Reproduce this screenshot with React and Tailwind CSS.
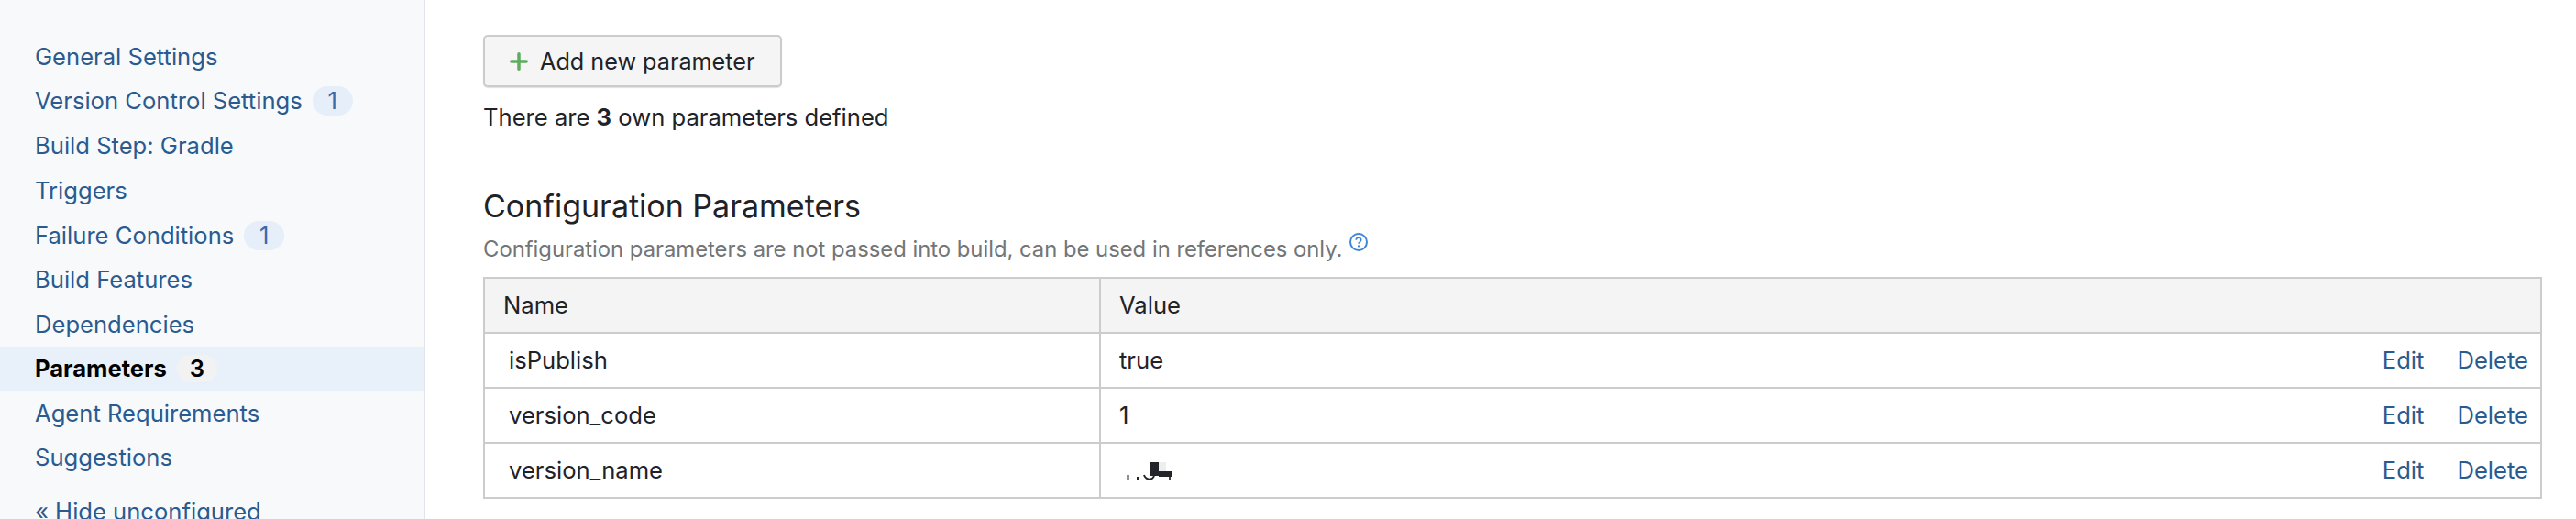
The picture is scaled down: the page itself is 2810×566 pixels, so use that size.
import { Plus } from "lucide-react";

const navItems = [
  { label: "General Settings", h: "h-12" },
  { label: "Version Control Settings", badge: 1, h: "h-12" },
  { label: "Build Step: Gradle", h: "h-[49px]" },
  { label: "Triggers", h: "h-[50px]" },
  { label: "Failure Conditions", badge: 1, h: "h-12" },
  { label: "Build Features", h: "h-12" },
  { label: "Dependencies", h: "h-[49px]" },
  { label: "Parameters", badge: 3, active: true, h: "h-12" },
  { label: "Agent Requirements", h: "h-[49px]" },
  { label: "Suggestions", h: "h-12" },
];

const params = [
  { name: "isPublish", value: "true" },
  { name: "version_code", value: "1" },
  { name: "version_name", value: "redacted" },
];

function NavItem({ item }) {
  if (item.active) {
    return (
      <div className={`flex items-center pl-[38px] bg-[#e8f1fa] ${item.h}`}>
        <span className="font-bold text-black">{item.label}</span>
        <span className="ml-[11px] w-[44px] h-[30px] rounded-full bg-[#f2f2f2] text-center leading-[30px] font-semibold text-black">
          {item.badge}
        </span>
      </div>
    );
  }
  return (
    <div className={`flex items-center pl-[38px] ${item.h}`}>
      <span className="text-[#2a5b90]">{item.label}</span>
      {item.badge && (
        <span className="ml-[11px] w-[44px] h-[32px] rounded-full bg-[#e6eff9] text-center leading-[32px] text-[#3a69ac]">
          {item.badge}
        </span>
      )}
    </div>
  );
}

// the value in the last row is scribbled out in the screenshot
function RedactedValue() {
  return (
    <svg width="70" height="30" viewBox="0 0 70 30">
      <rect x="43" y="6" width="8" height="10" fill="#eeeeee" />
      <rect x="8.5" y="20" width="2" height="5" fill="#222" />
      <rect x="19" y="22" width="3" height="3" fill="#222" />
      <path d="M27 20c2 6 9 6 11 1" fill="none" stroke="#222" strokeWidth="2" />
      <rect x="33" y="6" width="10" height="15" fill="#23252b" />
      <rect x="43" y="16" width="15" height="6" fill="#23252b" />
      <rect x="54" y="22" width="2" height="4" fill="#444" />
    </svg>
  );
}

function ParamRow({ param }) {
  return (
    <tr className="h-[60px]">
      <td className="border-2 border-[#cccccc] pl-[26px] p-0">{param.name}</td>
      <td className="border-2 border-[#cccccc] pl-[20px] p-0">
        <div className="flex items-center justify-between pr-[13px]">
          {param.value === "redacted" ? <RedactedValue /> : <span>{param.value}</span>}
          <span className="flex gap-[36px] text-[#2a5b90]">
            <span>Edit</span>
            <span>Delete</span>
          </span>
        </div>
      </td>
    </tr>
  );
}

export default function App() {
  return (
    <div className="flex h-[566px] overflow-hidden bg-white text-[25.6px] leading-[36px] text-[#1f2227] font-['Inter',sans-serif]">
      <aside className="w-[464px] shrink-0 bg-[#f7f9fb] border-r-2 border-[#e1e5e9] pt-[38px]">
        {navItems.map((item) => (
          <NavItem key={item.label} item={item} />
        ))}
        <div className="mt-[17px] pl-[38px] text-[#2a5b90]">« Hide unconfigured</div>
      </aside>

      <main className="flex-1 pl-[63px] pr-[37px] pt-[38px]">
        <button className="flex items-center w-[326px] h-[57px] pl-[23px] bg-[#f5f5f5] border-2 border-[#cccccc] rounded-[5px] shadow-[0_1px_1px_rgba(0,0,0,0.12)] text-[25.2px]">
          <Plus size={28} strokeWidth={3} className="text-[#5cad60]" />
          <span className="ml-[9px]">Add new parameter</span>
        </button>
        <p className="mt-[15px]">
          There are <b className="font-bold">3</b> own parameters defined
        </p>

        <h2 className="mt-[57px] text-[34px] leading-[44px] font-normal">Configuration Parameters</h2>
        <p className="mt-[8px] flex text-[23.8px] leading-[34px] text-[#737577]">
          Configuration parameters are not passed into build, can be used in references only.
          <svg width="20" height="20" viewBox="0 0 20 20" className="ml-[8px] mt-[-1px]" fill="none">
            <circle cx="10" cy="10" r="9" stroke="#3f87d9" strokeWidth="2" />
            <path d="M7.2 7.8c0-3.6 5.6-3.6 5.6 0 0 2-2.8 2-2.8 4" stroke="#3f87d9" strokeWidth="1.6" />
            <rect x="9" y="13.4" width="2" height="2" fill="#3f87d9" />
          </svg>
        </p>

        <table className="mt-[13px] w-full table-fixed border-collapse border-2 border-[#cccccc]">
          <colgroup>
            <col className="w-[672px]" />
            <col />
          </colgroup>
          <thead>
            <tr className="h-[60px] bg-[#f4f4f4] text-left">
              <th className="border-2 border-[#cccccc] pl-[20px] font-normal">Name</th>
              <th className="border-2 border-[#cccccc] pl-[20px] font-normal">Value</th>
            </tr>
          </thead>
          <tbody>
            {params.map((param) => (
              <ParamRow key={param.name} param={param} />
            ))}
          </tbody>
        </table>
      </main>
    </div>
  );
}
